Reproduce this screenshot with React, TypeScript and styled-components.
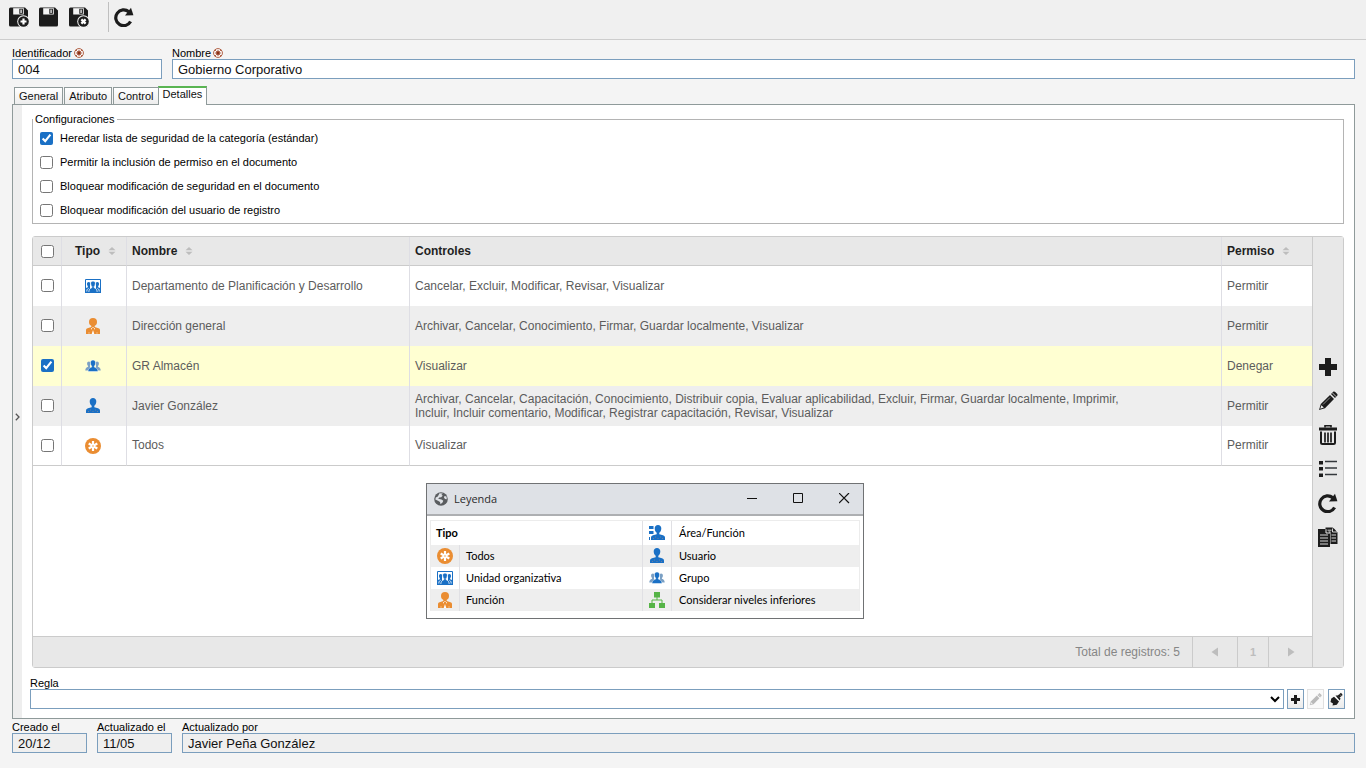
import React, { ReactNode, useState } from "react";
import styled, { createGlobalStyle, css } from "styled-components";

const INK = "#1c1c1c";
const BLUE = "#1a70c5";
const ORANGE = "#ea8d32";
const FIELD_BORDER = "#7b9ebd";
const PANEL_BORDER = "#8f9a9a";
const GRID_LINE = "#cbcbcb";

const GlobalStyle = createGlobalStyle`
  *, *::before, *::after { box-sizing: border-box; }
  body {
    margin: 0;
    background: #f4f4f4;
    color: #000;
    font-family: "Liberation Sans", Arial, sans-serif;
    font-size: 11px;
    line-height: 12px;
  }
  button, input, select { font-family: inherit; }
`;

const Page = styled.div`
  display: flex;
  flex-direction: column;
  min-height: 100vh;
`;

const Toolbar = styled.header`
  display: flex;
  align-items: flex-start;
  height: 40px;
  padding: 2px 4px 0;
  background: #f0f0f0;
  border-bottom: 1px solid #cdcdcd;
`;

const ToolButton = styled.button`
  display: flex;
  align-items: center;
  justify-content: center;
  width: 30px;
  height: 30px;
  padding: 0;
  border: 0;
  background: none;
`;

const Separator = styled.span`
  width: 1px;
  height: 30px;
  margin: 0 0 0 14px;
  background: #bfbfbf;
`;

const Content = styled.main`
  display: flex;
  flex: 1;
  flex-direction: column;
  padding: 7px 11px 15px 12px;
`;

const FieldRow = styled.div`
  display: flex;
  gap: 10px;
`;

const Field = styled.label<{ $width?: number }>`
  display: flex;
  flex-direction: column;
  ${(p) => (p.$width ? css`flex: 0 0 ${p.$width}px;` : css`flex: 1;`)}
  min-width: 0;
`;

const Caption = styled.span`
  display: flex;
  align-items: center;
  gap: 2px;
  height: 12px;
  white-space: nowrap;
`;

const TextBox = styled.input`
  width: 100%;
  height: 20px;
  padding: 0 5px;
  border: 1px solid ${FIELD_BORDER};
  border-radius: 0;
  background: #fff;
  color: #111;
  font-size: 13px;
  outline: 0;

  &:read-only { background: #efefef; }
`;

const Tabs = styled.div`
  display: flex;
  align-items: flex-end;
  gap: 1px;
  margin-top: 7px;
  padding-left: 2px;
`;

const Tab = styled.button<{ $active: boolean }>`
  height: 18px;
  padding: 0 4px;
  border: 1px solid ${PANEL_BORDER};
  background: linear-gradient(#fff, #ededed);
  color: #111;
  font-size: 11px;
  line-height: 16px;

  ${(p) =>
    p.$active &&
    css`
      z-index: 1;
      height: 19px;
      margin-left: -2px;
      padding-bottom: 5px;
      border-top: 2px solid #5ab552;
      border-bottom: 0;
      background: #fff;
      line-height: 12px;
    `}
`;

const Panel = styled.section`
  display: flex;
  flex: 1;
  margin-top: -1px;
  border: 1px solid ${PANEL_BORDER};
  background: #fff;
`;

const Expander = styled.button`
  display: flex;
  align-items: center;
  justify-content: center;
  width: 9px;
  padding: 11px 0 0;
  border: 0;
  background: #eee;
`;

const PanelBody = styled.div`
  display: flex;
  flex: 1;
  flex-direction: column;
  min-width: 0;
  padding: 8px 9px 9px 8px;
`;

const Settings = styled.fieldset`
  margin: 0 1px 12px 2px;
  padding: 0 0 1px 7px;
  border: 1px solid #b4b4b4;

  legend {
    margin-left: -7px;
    padding: 0 2px;
    line-height: 13px;
  }
`;

const Option = styled.label`
  display: flex;
  align-items: center;
  gap: 7px;
  height: 24px;
`;

const Tick = styled.input.attrs({ type: "checkbox" })`
  width: 13px;
  height: 13px;
  margin: 0;
  accent-color: ${BLUE};
`;

const Grid = styled.div`
  display: flex;
  flex: 1;
  margin: 0 1px 9px 2px;
  border: 1px solid ${GRID_LINE};
  border-radius: 3px;
`;

const GridMain = styled.div`
  display: flex;
  flex: 1;
  flex-direction: column;
  min-width: 0;
`;

const Table = styled.table`
  width: 100%;
  table-layout: fixed;
  border-collapse: separate;
  border-spacing: 0;
  color: #5c5c5c;
  font-size: 12px;
  line-height: 14px;

  col.check { width: 29px; }
  col.kind { width: 65px; }
  col.name { width: 283px; }
  col.access { width: 90px; }

  th, td {
    padding: 0 5px;
    border-right: 1px solid #dedee4;
    text-align: left;
  }
  th:last-child, td:last-child { border-right: 0; }
  th {
    height: 29px;
    border-bottom: 1px solid ${GRID_LINE};
    background: #e8e8e8;
    color: #1f1f1f;
  }
  th:first-child, td:first-child,
  th:nth-child(2), td:nth-child(2) {
    padding: 0;
    text-align: center;
  }
  th:nth-child(2) { padding-left: 3px; }
  td:not(:nth-child(2)) { padding-bottom: 1px; }
  input, td svg {
    display: block;
    margin: 0 auto;
  }
  td svg { transform: translateX(-1px); }
  tbody tr:last-child td { border-bottom: 1px solid ${GRID_LINE}; }
`;

const Row = styled.tr<{ $selected: boolean }>`
  height: 40px;
  background: #fff;
  &:nth-child(even) { background: #eee; }
  ${(p) => p.$selected && css`background: #ffffd2;`}
`;

const Controls = styled.div`
  max-width: 720px;
`;

const HeadLabel = styled.span`
  display: inline-flex;
  align-items: center;
  gap: 8px;
`;

const GridSpace = styled.div`
  position: relative;
  flex: 1;
  min-height: 150px;
`;

const Pager = styled.footer`
  display: flex;
  align-items: stretch;
  justify-content: flex-end;
  height: 31px;
  border-top: 1px solid ${GRID_LINE};
  background: #e8e8e8;
  color: #868686;
  font-size: 12px;
  line-height: 30px;
`;

const Total = styled.span`
  margin-right: 12px;
`;

const PagerButton = styled.button<{ $width: number }>`
  display: flex;
  align-items: center;
  justify-content: center;
  width: ${(p) => p.$width}px;
  padding: 0;
  border: 0;
  border-left: 1px solid ${GRID_LINE};
  background: none;
  color: #bdbdbd;
  font-size: 11px;
  font-weight: bold;
`;

const Actions = styled.div`
  display: flex;
  flex-direction: column;
  align-items: center;
  justify-content: center;
  width: 31px;
  border-left: 1px solid ${GRID_LINE};
  background: #e8e8e8;
`;

const ActionButton = styled(ToolButton)`
  height: 34px;
`;

const RuleRow = styled.div`
  display: flex;
  gap: 3px;
`;

const RuleSelect = styled.select`
  flex: 1;
  height: 20px;
  border: 1px solid ${FIELD_BORDER};
  border-radius: 0;
  background: #fff;
  font-size: 13px;
`;

const RuleButton = styled.button`
  display: flex;
  align-items: center;
  justify-content: center;
  width: 17px;
  height: 20px;
  padding: 0;
  border: 1px solid ${FIELD_BORDER};
  background: linear-gradient(#fff, #ebebeb);

  &:disabled {
    margin-right: 1px;
    border-color: #e0e0e0;
    background: #fafafa;
  }
`;

const FooterRow = styled(FieldRow)`
  margin-top: 2px;
`;

const Dialog = styled.div`
  position: absolute;
  top: 17px;
  left: 393px;
  width: 438px;
  padding-bottom: 7px;
  border: 1px solid #707274;
  background: #fff;
`;

const TitleBar = styled.div`
  display: flex;
  align-items: center;
  height: 32px;
  padding-left: 7px;
  border-bottom: 2px solid #adafb2;
  background: #dee1e6;
  color: #2c2c2c;

  h2 {
    flex: 1;
    margin: 0 0 0 6px;
    font-family: "Open Sans", "Noto Sans", sans-serif;
    font-size: 11px;
    font-weight: normal;
  }
`;

const WindowButtons = styled.div`
  display: flex;
  align-self: flex-start;
  gap: 9px;
`;

const WindowButton = styled(ToolButton)`
  width: 37px;
  height: 29px;
`;

const Legend = styled.table`
  width: 430px;
  margin: 4px 3px 0;
  table-layout: fixed;
  border-collapse: separate;
  border-spacing: 0;
  border: 1px solid #ececec;
  border-bottom: 0;
  font-family: Lato, "Open Sans", sans-serif;
  font-size: 11px;

  col.icon { width: 29px; }
  col.left { width: 183px; }

  td, th {
    height: 22px;
    padding: 0 7px;
    border-right: 1px solid #e0e0e4;
    text-align: left;
  }
  th { padding: 0 5px; }
  td:nth-last-child(2), td:nth-child(1):not([colspan]) { padding: 0; }
  td:nth-child(2):not(:last-child) { padding-left: 6px; }
  tr:first-child td:nth-child(2) { padding-left: 0; }
  td:last-child { border-right: 0; }
  tr:first-child > * { height: 24px; }
  tr:nth-child(even) { background: #eee; }
  svg { display: block; margin: 0 auto; }
`;

/* Floppy disk; the badge is a circled plus or cross at the lower right. */
function SaveIcon({ badge }: { badge?: "plus" | "cross" }) {
  return (
    <svg width="22" height="20" viewBox="0 0 22 20">
      <path d="M2.500.5H17l3 3V18a1.500 1.500 0 0 1-1.500 1.500h-16A1.500 1.500 0 0 1 1 18V2A1.500 1.500 0 0 1 2.500.5z" fill={INK} />
      <path d="M5.200 1.200h10.600v6.300H5.200z" fill="#f4f4f4" />
      <path d="M11.300 1.800h3.600v5h-3.600z" fill={INK} />
      <path d="M12.300 2.500h1.600v3.600h-1.600z" fill="#cfcfcf" />
      {badge && (
        <>
          <circle cx="15.500" cy="14.500" r="6.300" fill="#f0f0f0" />
          <circle cx="15.500" cy="14.500" r="5.300" fill={INK} />
          <path
            d="M15.500 11.500v6M12.500 14.500h6"
            stroke="#fff"
            strokeWidth="2.200"
            transform={badge === "cross" ? "rotate(45 15.500 14.500)" : undefined}
          />
        </>
      )}
    </svg>
  );
}

function ReloadIcon() {
  return (
    <svg width="20" height="20" viewBox="0 0 20 20">
      <path d="M14.800 4.800A7.900 7.900 0 1 0 16.600 14.600" fill="none" stroke={INK} strokeWidth="3.200" />
      <path d="M17 .8l2.400 7.400-8.400.3z" fill={INK} />
    </svg>
  );
}

function RequiredIcon() {
  return (
    <svg width="10" height="10" viewBox="0 0 10 10" aria-label="obligatorio">
      <circle cx="5" cy="5" r="4.400" fill="#fff" stroke="#a4492a" strokeWidth=".9" />
      <path d="M1.800 1.800l6.400 6.400M8.200 1.800L1.800 8.200" stroke="#a4492a" strokeWidth=".8" />
      <path d="M5 2.500v5M2.500 5h5" stroke="#8c2f12" strokeWidth="1.600" />
    </svg>
  );
}

function PlusIcon({ size = 18 }: { size?: number }) {
  return (
    <svg width={size} height={size} viewBox="0 0 18 18">
      <path d="M6 0h6v6h6v6h-6v6H6v-6H0V6h6z" fill={INK} />
    </svg>
  );
}

function PencilIcon({ size = 20, color = INK }: { size?: number; color?: string }) {
  return (
    <svg width={size} height={size} viewBox="0 0 20 20">
      <path d="M1 19l1.800-6L12 4l4 4-9 9.200z" fill={color} />
      <path d="M13 3l2-2c.7-.7 1.500-.6 2.200 0l1.800 1.800c.7.700.7 1.500 0 2.200l-2 2z" fill={color} />
      <path d="M2.200 17.800l1.200-3.600 2.400 2.300z" fill="#eee" />
      <path d="M5 13.500l7-7" stroke="#bbb" strokeWidth=".7" />
      <path d="M14.300 1.800l4 4" stroke="#e8e8e8" strokeWidth=".8" />
    </svg>
  );
}

function TrashIcon() {
  return (
    <svg width="18" height="20" viewBox="0 0 18 20">
      <path d="M6 2.500V.8h6v1.700" fill="none" stroke={INK} strokeWidth="1.600" />
      <path d="M0 2.500h18v3H0z" fill={INK} />
      <path d="M2 6.500v11a1.500 1.500 0 0 0 1.500 1.500h11a1.500 1.500 0 0 0 1.500-1.500v-11" fill="#e8e8e8" stroke={INK} strokeWidth="2" />
      <path d="M6 7.500v10M9 7.500v10M12 7.500v10" stroke={INK} strokeWidth="1.700" />
    </svg>
  );
}

function ListIcon() {
  return (
    <svg width="18" height="18" viewBox="0 0 18 18">
      <path d="M0 1h4v3.500H0zM0 7h4v3.500H0zM0 13.500h4V17H0z" fill={INK} />
      <path d="M6 1.500h12M6 8h12M6 14.500h12" stroke="#34383c" strokeWidth="1.400" />
    </svg>
  );
}

function CopyIcon() {
  return (
    <svg width="20" height="20" viewBox="0 0 20 20">
      <path d="M7.500.5h7l2 1.500 3 3.500V17h-7V4.500h-5z" fill={INK} />
      <path d="M0 2h8l4 4v14H0z" fill={INK} />
      <path d="M8 2.200V6h4" fill="none" stroke="#e8e8e8" />
      <path d="M2 8h8M2 11h8M2 14h8M2 17h8M13.500 8h4.500M13.500 11h4.500M13.500 14h4.500" stroke="#d8d8d8" strokeWidth="1" />
      <path d="M9.500 3.200h4M14.500 1.500V5h4.500" fill="none" stroke="#e8e8e8" strokeWidth=".9" />
    </svg>
  );
}

function BrushIcon() {
  return (
    <svg width="13" height="14" viewBox="0 0 13 14">
      <path d="M11 .8l1.700 2.200L9.500 5.800 7.500 3.800z" fill={INK} />
      <path d="M5.500 3.500h2.200l2.800 3-.8 2z" fill={INK} />
      <path d="M4 4.800l5 4.600-2.200 3.400-4.300.7.500-2L.5 10l.8-3.400z" fill={INK} />
      <path d="M4.600 4.300l4.800 4.600" stroke="#f2f2f2" strokeWidth=".6" />
      <path d="M10 2.500l1.500 1.700" stroke="#aaa" strokeWidth=".7" />
    </svg>
  );
}

function SortIcon() {
  return (
    <svg width="8" height="8" viewBox="0 0 8 8">
      <path d="M4 0l3.500 3.200h-7zM4 8L.5 4.800h7z" fill="#bdbdbd" />
    </svg>
  );
}

function Arrow({ left = false }: { left?: boolean }) {
  return (
    <svg width="8" height="10" viewBox="0 0 8 10">
      <path d={left ? "M7 .5v9L.5 5z" : "M1 .5v9L7.500 5z"} fill="#bdbdbd" />
    </svg>
  );
}

const PERSON =
  "M8 0C6 0 4.700 1.400 4.700 3.200c0 2 .8 3.600 2 4.600v1.400L3 10.300c-1.400.4-2 1.200-2 2.500V15h14v-2.200c0-1.300-.6-2.100-2-2.500L9.300 9.200V7.800c1.200-1 2-2.600 2-4.600C11.300 1.400 10 0 8 0z";
const PERSON_DOTS = "M5 11.500h1v1H5zM10 11.500h1v1h-1zM7.500 13h1v1h-1zM12 13h1v1h-1zM3 13h1v1H3z";

function UserIcon() {
  return (
    <svg width="16" height="16" viewBox="0 0 16 16">
      <path d={PERSON} fill={BLUE} />
      <path d={PERSON_DOTS} fill="#6f7f9c" />
    </svg>
  );
}

function RoleIcon() {
  return (
    <svg width="16" height="16" viewBox="0 0 16 16">
      <circle cx="8" cy="4" r="4" fill={ORANGE} />
      <path d="M6.300 6h3.400v3l3.800 1.300c1 .4 1.500 1 1.500 2V16H1v-3.700c0-1 .5-1.600 1.500-2L6.300 9z" fill={ORANGE} />
      <path d="M8 12l1.300 4H6.700zM6 10.200h1v1H6zM9 10.200h1v1H9zM7.500 9h1v1h-1z" fill="#fff" />
      <path d="M4 14v2M12 14v2" stroke="#f7d4ae" strokeWidth=".6" />
    </svg>
  );
}

function GroupIcon() {
  return (
    <svg width="16" height="14" viewBox="0 0 16 14">
      <path d="M4 2.500c-1.200 0-1.900.8-1.900 2s.4 1.900 1 2.400v.9C1.500 8.400.3 9 .3 11.500H5V3c-.3-.3-.6-.5-1-.5zM12 2.500c1.200 0 1.900.8 1.900 2s-.4 1.900-1 2.400v.9c1.600.6 2.800 1.200 2.800 3.700H11V3c.3-.3.6-.5 1-.5z" fill="#7ba0c4" />
      <path d="M8 1C6.400 1 5.400 2.200 5.400 3.800c0 1.500.5 2.600 1.300 3.300v1C5.400 8.800 3.300 9 3 12.500h10c-.3-3.500-2.400-3.700-3.700-4.400v-1c.8-.7 1.300-1.800 1.300-3.300C10.600 2.200 9.600 1 8 1z" fill={BLUE} stroke="#fff" strokeOpacity=".8" strokeWidth=".6" />
    </svg>
  );
}

function UnitIcon() {
  return (
    <svg width="16" height="14" viewBox="0 0 16 14">
      <path d="M.5.5h15v13H.5z" fill="#fff" stroke={BLUE} />
      <path d="M3.500 3C2.300 3 2 4 2 5c0 1 .4 1.600.8 2v1.200L1 9v4h4V3.500C4.700 3.200 4.200 3 3.500 3zM12.500 3c1.200 0 1.500 1 1.500 2 0 1-.4 1.600-.8 2v1.200L15 9v4h-4V3.500c.3-.3.8-.5 1.500-.5z" fill={BLUE} />
      <path d="M1.800 12.500c0-2 .8-2.700 1.700-3.100M14.200 12.500c0-2-.8-2.700-1.700-3.100" fill="none" stroke="#fff" strokeWidth=".9" />
      <path d="M8 2C6.400 2 5.500 3 5.600 4.600c0 1.400.5 2.300 1.200 2.900v1.200C5.500 9.300 4 9.700 3.800 13.500h8.400c-.2-3.800-1.700-4.200-3-4.800V7.500c.7-.6 1.200-1.500 1.200-2.900C10.500 3 9.600 2 8 2z" fill={BLUE} stroke="#fff" strokeWidth=".8" />
      <path d="M0 13h16v1H0z" fill={BLUE} />
    </svg>
  );
}

function EveryoneIcon() {
  return (
    <svg width="16" height="16" viewBox="0 0 16 16">
      <circle cx="8" cy="8" r="8" fill={ORANGE} />
      <path d="M8 3v10M3.700 5.500l8.600 5M12.300 5.500l-8.600 5" stroke="#fff" strokeWidth="2.200" />
      <circle cx="8" cy="8" r="1" fill="#f6c796" />
    </svg>
  );
}

function AreaIcon() {
  return (
    <svg width="16" height="16" viewBox="0 0 16 16">
      <g transform="translate(1 0)">
        <path d={PERSON} fill={BLUE} />
        <path d={PERSON_DOTS} fill="#6f7f9c" />
      </g>
      <path d="M0 1h4.500v3H0zM0 6h4.500v3H0zM0 12h1v3H0z" fill={BLUE} />
    </svg>
  );
}

function LevelsIcon() {
  return (
    <svg width="16" height="16" viewBox="0 0 16 16">
      <path d="M5 0h6v5.500H5zM0 11h6v5H0zM10 11h6v5h-6z" fill="#56b447" />
      <path d="M8 5v3M3 11V8h10v3" fill="none" stroke="#56b447" />
    </svg>
  );
}

function GlobeIcon() {
  return (
    <svg width="14" height="14" viewBox="0 0 14 14">
      <circle cx="7" cy="7" r="6.800" fill="#5a5d60" />
      <path d="M5.500 1.200l3.300.2L7.300 3l1.500.6-1.600 1.700-2 .3-1 1.200 3.300.6 1.800 1.400-.8 1.700-2 1.700-.5-2.300L4 8.800 1.300 7.600l.5-2.200 2-1z" fill="#dee1e6" />
      <path d="M10.500 4l2 .6.3 2.600-1.800-.2-1-1.600z" fill="#dee1e6" />
    </svg>
  );
}

type Kind = "unit" | "role" | "group" | "user" | "everyone";

const KIND_ICON: Record<Kind, ReactNode> = {
  unit: <UnitIcon />,
  role: <RoleIcon />,
  group: <GroupIcon />,
  user: <UserIcon />,
  everyone: <EveryoneIcon />,
};

const ROWS: { kind: Kind; name: string; controls: string; access: string }[] = [
  { kind: "unit", name: "Departamento de Planificación y Desarrollo", controls: "Cancelar, Excluir, Modificar, Revisar, Visualizar", access: "Permitir" },
  { kind: "role", name: "Dirección general", controls: "Archivar, Cancelar, Conocimiento, Firmar, Guardar localmente, Visualizar", access: "Permitir" },
  { kind: "group", name: "GR Almacén", controls: "Visualizar", access: "Denegar" },
  {
    kind: "user",
    name: "Javier González",
    controls:
      "Archivar, Cancelar, Capacitación, Conocimiento, Distribuir copia, Evaluar aplicabilidad, Excluir, Firmar, Guardar localmente, Imprimir, Incluir, Incluir comentario, Modificar, Registrar capacitación, Revisar, Visualizar",
    access: "Permitir",
  },
  { kind: "everyone", name: "Todos", controls: "Visualizar", access: "Permitir" },
];

const OPTIONS = [
  "Heredar lista de seguridad de la categoría (estándar)",
  "Permitir la inclusión de permiso en el documento",
  "Bloquear modificación de seguridad en el documento",
  "Bloquear modificación del usuario de registro",
];

const LEGEND: [ReactNode, string, ReactNode, string][] = [
  [<EveryoneIcon />, "Todos", <UserIcon />, "Usuario"],
  [<UnitIcon />, "Unidad organizativa", <GroupIcon />, "Grupo"],
  [<RoleIcon />, "Función", <LevelsIcon />, "Considerar niveles inferiores"],
];

const TABS = ["General", "Atributo", "Control", "Detalles"];

function LegendWindow() {
  return (
    <Dialog role="dialog" aria-label="Leyenda">
      <TitleBar>
        <GlobeIcon />
        <h2>Leyenda</h2>
        <WindowButtons>
          <WindowButton aria-label="Minimizar">
            <svg width="11" height="11"><path d="M0 5.500h10" stroke="#111" /></svg>
          </WindowButton>
          <WindowButton aria-label="Maximizar">
            <svg width="11" height="11"><path d="M.5.500h9v9H.5z" fill="none" stroke="#111" /></svg>
          </WindowButton>
          <WindowButton aria-label="Cerrar">
            <svg width="11" height="11"><path d="M0 0l10 10M10 0L0 10" stroke="#111" strokeWidth="1.200" /></svg>
          </WindowButton>
        </WindowButtons>
      </TitleBar>
      <Legend>
        <colgroup>
          <col className="icon" />
          <col className="left" />
          <col className="icon" />
          <col />
        </colgroup>
        <tbody>
          <tr>
            <th colSpan={2}>Tipo</th>
            <td><AreaIcon /></td>
            <td>Área/Función</td>
          </tr>
          {LEGEND.map(([iconA, textA, iconB, textB]) => (
            <tr key={textA}>
              <td>{iconA}</td>
              <td>{textA}</td>
              <td>{iconB}</td>
              <td>{textB}</td>
            </tr>
          ))}
        </tbody>
      </Legend>
    </Dialog>
  );
}

export default function App() {
  const [tab, setTab] = useState("Detalles");
  const [selected, setSelected] = useState<string[]>(["GR Almacén"]);

  const toggle = (name: string) =>
    setSelected((s) => (s.includes(name) ? s.filter((n) => n !== name) : [...s, name]));

  return (
    <Page>
      <GlobalStyle />
      <Toolbar>
        <ToolButton aria-label="Guardar y nuevo"><SaveIcon badge="plus" /></ToolButton>
        <ToolButton aria-label="Guardar"><SaveIcon /></ToolButton>
        <ToolButton aria-label="Guardar y salir"><SaveIcon badge="cross" /></ToolButton>
        <Separator />
        <ToolButton aria-label="Actualizar"><ReloadIcon /></ToolButton>
      </Toolbar>

      <Content>
        <FieldRow>
          <Field $width={150}>
            <Caption>Identificador <RequiredIcon /></Caption>
            <TextBox defaultValue="004" />
          </Field>
          <Field>
            <Caption>Nombre <RequiredIcon /></Caption>
            <TextBox defaultValue="Gobierno Corporativo" />
          </Field>
        </FieldRow>

        <Tabs role="tablist">
          {TABS.map((t) => (
            <Tab key={t} role="tab" aria-selected={t === tab} $active={t === tab} onClick={() => setTab(t)}>
              {t}
            </Tab>
          ))}
        </Tabs>

        <Panel>
          <Expander aria-label="Expandir">
            <svg width="5" height="8" viewBox="0 0 5 8">
              <path d="M.8.800L4 4 .8 7.200" fill="none" stroke="#555" strokeWidth="1.300" />
            </svg>
          </Expander>
          <PanelBody>
            <Settings>
              <legend>Configuraciones</legend>
              {OPTIONS.map((text, i) => (
                <Option key={text}>
                  <Tick defaultChecked={i === 0} />
                  {text}
                </Option>
              ))}
            </Settings>

            <Grid>
              <GridMain>
                <Table>
                  <colgroup>
                    <col className="check" />
                    <col className="kind" />
                    <col className="name" />
                    <col />
                    <col className="access" />
                  </colgroup>
                  <thead>
                    <tr>
                      <th><Tick aria-label="Seleccionar todo" /></th>
                      <th><HeadLabel>Tipo <SortIcon /></HeadLabel></th>
                      <th><HeadLabel>Nombre <SortIcon /></HeadLabel></th>
                      <th>Controles</th>
                      <th><HeadLabel>Permiso <SortIcon /></HeadLabel></th>
                    </tr>
                  </thead>
                  <tbody>
                    {ROWS.map((r) => (
                      <Row key={r.name} $selected={selected.includes(r.name)}>
                        <td>
                          <Tick aria-label={r.name} checked={selected.includes(r.name)} onChange={() => toggle(r.name)} />
                        </td>
                        <td>{KIND_ICON[r.kind]}</td>
                        <td>{r.name}</td>
                        <td><Controls>{r.controls}</Controls></td>
                        <td>{r.access}</td>
                      </Row>
                    ))}
                  </tbody>
                </Table>
                <GridSpace>
                  <LegendWindow />
                </GridSpace>
                <Pager>
                  <Total>Total de registros: 5</Total>
                  <PagerButton $width={45} aria-label="Página anterior"><Arrow left /></PagerButton>
                  <PagerButton $width={31}>1</PagerButton>
                  <PagerButton $width={44} aria-label="Página siguiente"><Arrow /></PagerButton>
                </Pager>
              </GridMain>
              <Actions>
                <ActionButton aria-label="Agregar"><PlusIcon /></ActionButton>
                <ActionButton aria-label="Editar"><PencilIcon /></ActionButton>
                <ActionButton aria-label="Eliminar"><TrashIcon /></ActionButton>
                <ActionButton aria-label="Leyenda"><ListIcon /></ActionButton>
                <ActionButton aria-label="Actualizar lista"><ReloadIcon /></ActionButton>
                <ActionButton aria-label="Copiar"><CopyIcon /></ActionButton>
              </Actions>
            </Grid>

            <Caption as="label" htmlFor="regla">Regla</Caption>
            <RuleRow>
              <RuleSelect id="regla"><option value=""></option></RuleSelect>
              <RuleButton aria-label="Agregar regla"><PlusIcon size={9} /></RuleButton>
              <RuleButton aria-label="Editar regla" disabled><PencilIcon size={13} color="#b9b9b9" /></RuleButton>
              <RuleButton aria-label="Limpiar regla"><BrushIcon /></RuleButton>
            </RuleRow>
          </PanelBody>
        </Panel>

        <FooterRow>
          <Field $width={75}>
            <Caption>Creado el</Caption>
            <TextBox readOnly value="20/12" />
          </Field>
          <Field $width={75}>
            <Caption>Actualizado el</Caption>
            <TextBox readOnly value="11/05" />
          </Field>
          <Field>
            <Caption>Actualizado por</Caption>
            <TextBox readOnly value="Javier Peña González" />
          </Field>
        </FooterRow>
      </Content>
    </Page>
  );
}
